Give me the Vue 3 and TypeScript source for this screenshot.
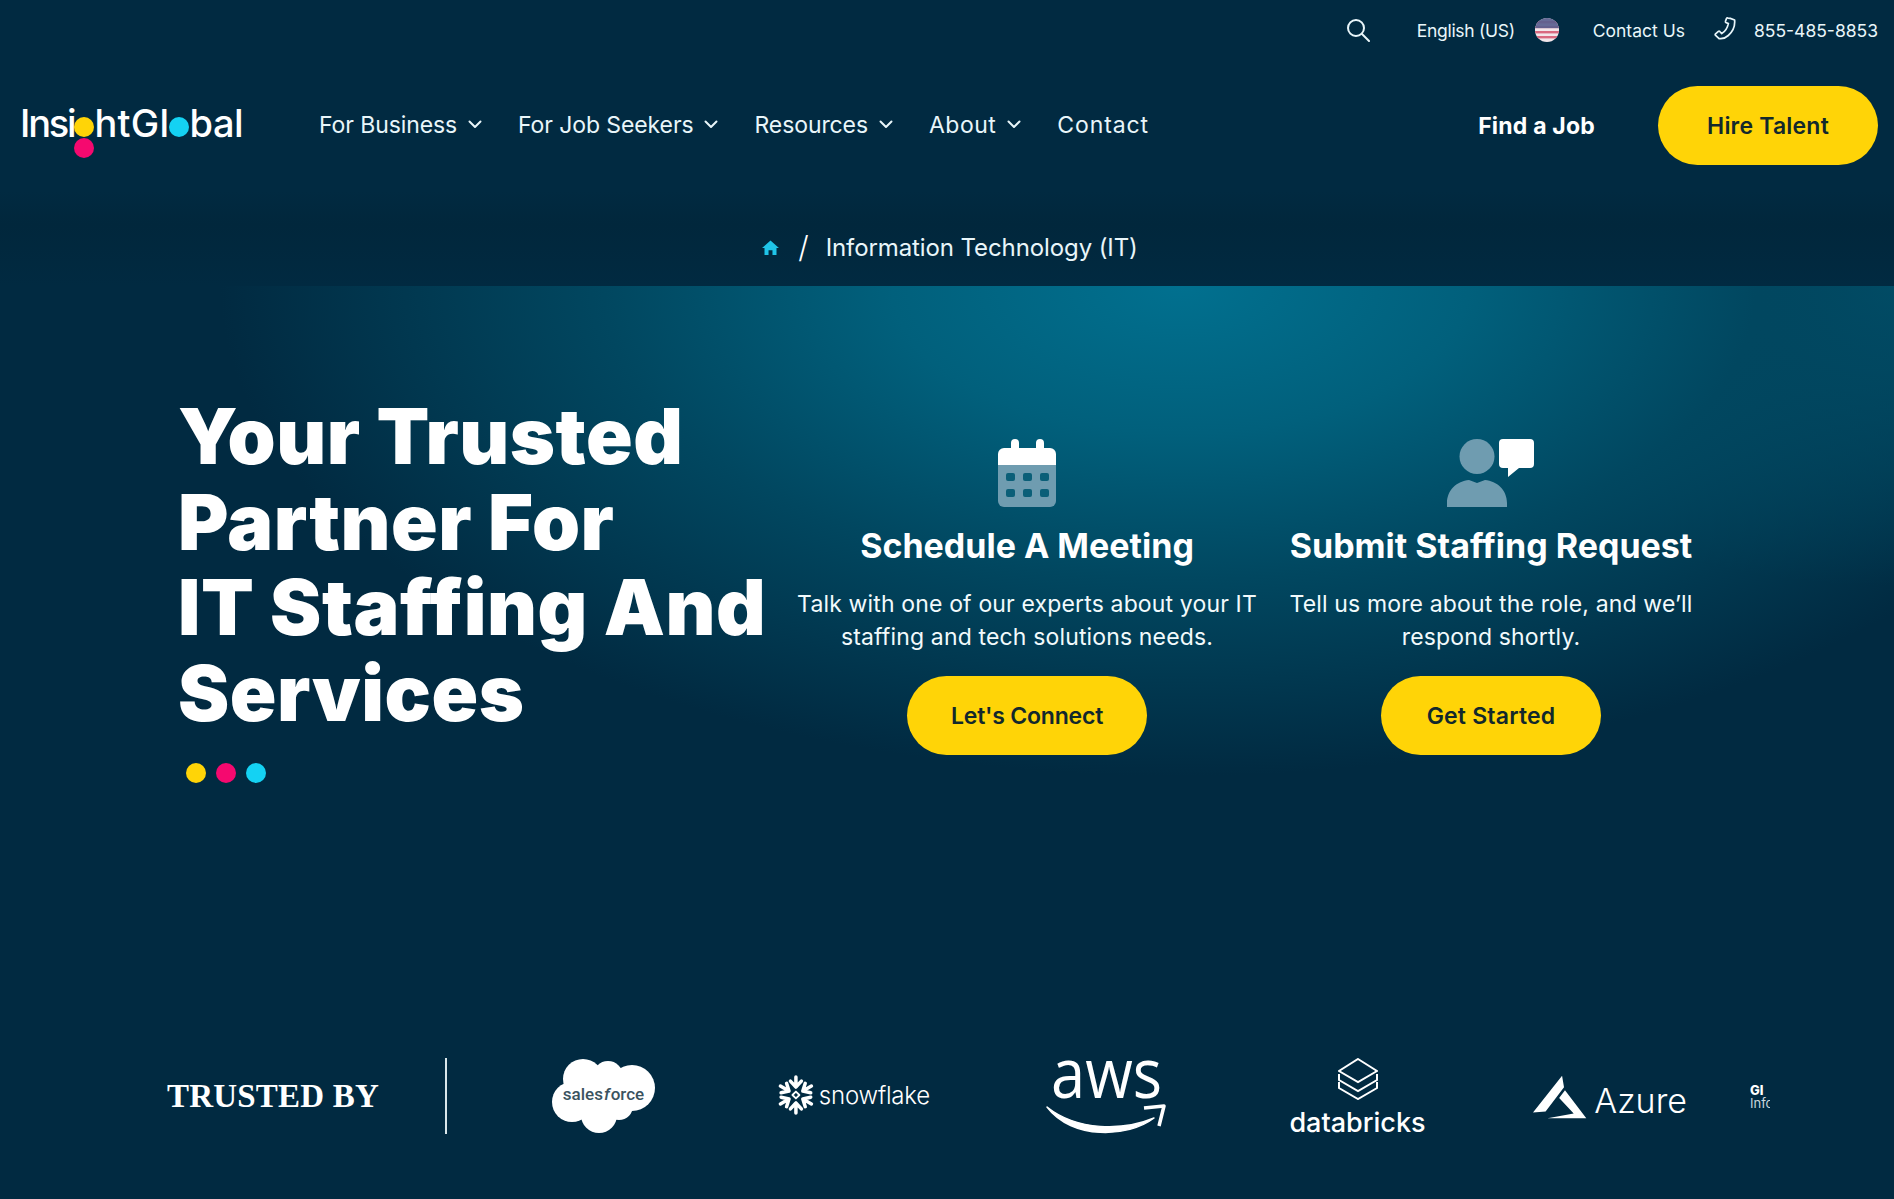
<template>
  <div class="page">
    <header class="topbar">
      <svg class="search" viewBox="0 0 24 24" width="24" height="24" fill="none" stroke="#e9f6fa" stroke-width="2" stroke-linecap="round">
        <circle cx="10" cy="10" r="8" />
        <path d="M16 16l7 7" />
      </svg>
      <span class="lang">English (US)</span>
      <svg class="flag" viewBox="0 0 24 24" width="24" height="24">
        <defs><clipPath id="flagclip"><circle cx="12" cy="12" r="12" /></clipPath></defs>
        <g clip-path="url(#flagclip)">
          <rect width="24" height="24" fill="#f2e6ea" />
          <rect y="3" width="24" height="2.400" fill="#d9687f" />
          <rect y="8" width="24" height="2.400" fill="#d9687f" />
          <rect y="13" width="24" height="2.400" fill="#d9687f" />
          <rect y="18" width="24" height="2.400" fill="#d9687f" />
          <rect width="24" height="10.400" fill="#5a5f8f" opacity=".92" />
          <rect y="10.400" width="24" height="2" fill="#f2e6ea" />
        </g>
      </svg>
      <span class="contact">Contact Us</span>
      <svg class="phone" viewBox="0 0 24 24" width="23" height="23" fill="none" stroke="#e9f6fa" stroke-width="1.800" stroke-linejoin="round">
        <path d="M17 1.500l4.500 1.600c.6 6-2.200 12.200-6.600 16.200-2.400 2.200-6.500 3.700-9.600 3.200L1.400 19c-.3-.6-.2-1 .2-1.400l3-2.600c.5-.4 1-.3 1.400.1l2.100 2.200c3.600-2.200 6-6.400 6.900-10.400l-2.600-1.200c-.5-.3-.6-.7-.4-1.200l1-2.900c.3-.6 1-.7 1.600-.5z" />
      </svg>
      <span class="tel">855-485-8853</span>
    </header>

    <nav class="nav">
      <div class="logo">
        <span class="tight">Insi</span>
        <span class="ldot yellow"><i class="ldot pink"></i></span>
        <span class="loose">htGl</span>
        <span class="ldot cyan"></span>
        <span class="end">bal</span>
      </div>
      <ul class="menu">
        <li v-for="item in menu" :key="item.label">
          {{ item.label }}
          <svg v-if="item.caret" viewBox="0 0 14 9" width="14" height="9" fill="none" stroke="#e9f6fa" stroke-width="2" stroke-linecap="round" stroke-linejoin="round">
            <path d="M1.500 1.500L7 7l5.500-5.500" />
          </svg>
        </li>
      </ul>
      <a class="find">Find a Job</a>
      <a class="btn hire">Hire Talent</a>
    </nav>

    <div class="crumbs">
      <svg viewBox="0 0 18 16" width="17" height="15" fill="#1fc4e8">
        <path d="M9 .5L18 8.600h-2.600V16h-4.300v-5H6.900v5H2.600V8.600H0z" />
      </svg>
      <span class="slash">/</span>
      <span>Information Technology (IT)</span>
    </div>

    <section class="hero">
      <div class="headline">
        <h1>Your Trusted<br />Partner For<br />IT Staffing And<br />Services</h1>
        <div class="dots">
          <i class="yellow"></i>
          <i class="pink"></i>
          <i class="cyan"></i>
        </div>
      </div>

      <div class="card">
        <svg class="icon" viewBox="0 0 58 68" width="58" height="68">
          <path d="M0 26h58v36a6 6 0 0 1-6 6H6a6 6 0 0 1-6-6z" fill="#6f9cb0" />
          <path d="M0 26V15a6 6 0 0 1 6-6h7V4a4 4 0 0 1 8 0v5h17V4a4 4 0 0 1 8 0v5h6a6 6 0 0 1 6 6v11z" fill="#fff" />
          <g fill="#0b5f78">
            <rect v-for="c in calendarCells" :key="c.x + '-' + c.y" :x="c.x" :y="c.y" width="9" height="8" rx="2" />
          </g>
        </svg>
        <h2>Schedule A Meeting</h2>
        <p>Talk with one of our experts about your IT<br />staffing and tech solutions needs.</p>
        <a class="btn connect">Let's Connect</a>
      </div>

      <div class="card">
        <svg class="icon" viewBox="0 0 88 68" width="88" height="68">
          <circle cx="30" cy="17.500" r="17.500" fill="#6f9cb0" />
          <path d="M0 68V64C0 51 10 42 22 41l8 3 8-3c12 1 22 10 22 23v4z" fill="#6f9cb0" />
          <path d="M56 0h27a4 4 0 0 1 4 4v21a4 4 0 0 1-4 4H72l-11 9v-9h-5a4 4 0 0 1-4-4V4a4 4 0 0 1 4-4z" fill="#fff" />
        </svg>
        <h2>Submit Staffing Request</h2>
        <p>Tell us more about the role, and we’ll<br />respond shortly.</p>
        <a class="btn started">Get Started</a>
      </div>
    </section>

    <section class="trusted">
      <div class="tlabel">TRUSTED BY</div>
      <div class="logos">
        <div class="l-sf">
          <svg viewBox="0 0 105 75" width="105" height="75" fill="#fff">
            <circle cx="32" cy="21" r="20" />
            <circle cx="57" cy="18" r="15" />
            <circle cx="81" cy="30" r="23" />
            <circle cx="21" cy="44" r="20" />
            <circle cx="48" cy="57" r="18" />
            <circle cx="68" cy="48" r="14" />
            <circle cx="50" cy="36" r="20" />
          </svg>
          <span class="sf-word">sales<i>f</i>orce</span>
        </div>

        <div class="l-snow">
          <svg viewBox="0 0 40 40" width="40" height="40" fill="none" stroke="#fff" stroke-width="3.500" stroke-linecap="round" stroke-linejoin="round">
            <path v-for="a in snowAngles" :key="a" d="M20 12V2M14.500 6l5.500 6 5.500-6" :transform="`rotate(${a} 20 20)`" />
            <path d="M20 16.500l3.500 3.500-3.500 3.500-3.500-3.500z" stroke-width="1.800" />
          </svg>
          <span>snowflake</span>
        </div>

        <svg class="l-aws" viewBox="0 0 122 78" width="122" height="78">
          <text x="5" y="40" textLength="111" lengthAdjust="spacingAndGlyphs" class="aws-text">aws</text>
          <path d="M1 49c30 24 76 24 107 11-26 20-82 22-107-11z" fill="#fff" stroke="#fff" stroke-width="1.500" stroke-linejoin="round" />
          <path d="M98 50l20-2-5 20" fill="none" stroke="#fff" stroke-width="3.500" stroke-linejoin="round" />
        </svg>

        <div class="l-db">
          <svg viewBox="0 0 40 42" width="40" height="42" fill="none" stroke="#fff" stroke-width="2">
            <path d="M20 1l19 12-19 11L1 13zM1 16v6l19 11 19-11v-6M1 24v6l19 11 19-11v-6" />
          </svg>
          <span>databricks</span>
        </div>

        <div class="l-az">
          <svg viewBox="0 0 56 44" width="56" height="44" fill="#fff">
            <path d="M30 0L0 38l13-1L32 12zM33 15l22 29H15l27-5-15-16z" />
          </svg>
          <span>Azure</span>
        </div>

        <div class="l-gi"><b>GI</b><span>Info</span></div>
      </div>
    </section>
  </div>
</template>

<script setup lang="ts">
interface MenuItem {
  label: string
  caret: boolean
}

const menu: MenuItem[] = [
  { label: 'For Business', caret: true },
  { label: 'For Job Seekers', caret: true },
  { label: 'Resources', caret: true },
  { label: 'About', caret: true },
  { label: 'Contact', caret: false }
]

const calendarCells = [34, 50].flatMap((y) => [8, 25, 42].map((x) => ({ x, y })))
const snowAngles = [0, 60, 120, 180, 240, 300]
</script>

<style>
html, body { margin: 0; background: #012a41; }
</style>

<style scoped>
* { box-sizing: border-box; }

.page {
  width: 1894px;
  height: 1199px;
  overflow: hidden;
  background: #012a41;
  color: #fff;
  font-family: Inter, "Noto Sans", sans-serif;
  display: flex;
  flex-direction: column;
}

.topbar {
  height: 60px;
  display: flex;
  align-items: center;
  justify-content: flex-end;
  padding-right: 16px;
  font-size: 17.500px;
  color: #e9f6fa;
}
.search { margin-right: 47px; }
.lang { letter-spacing: -0.3px; }
.flag { margin-left: 20px; }
.contact { margin-left: 34px; }
.phone { margin-left: 29px; margin-top: -4px; }
.tel { margin-left: 17px; }

.nav {
  height: 131px;
  display: flex;
  align-items: center;
  padding: 0 16px 0 20px;
}
.logo {
  display: flex;
  align-items: center;
  font-size: 38px;
  font-weight: 500;
  width: 299px;
  padding-bottom: 6px;
}
.tight { letter-spacing: -2.200px; }
.loose { letter-spacing: 0.3px; }
.end { letter-spacing: -0.4px; }
.ldot {
  display: inline-block;
  position: relative;
  width: 20px;
  height: 20px;
  border-radius: 50%;
  margin: 9px 0 0;
}
.ldot.pink { position: absolute; left: 0; top: 21px; margin: 0; }
.yellow { background: #ffd407; }
.pink { background: #f5096f; }
.cyan { background: #14d2f3; }

.menu {
  list-style: none;
  margin: 0;
  padding: 0 0 2px;
  flex: 1;
  display: flex;
  gap: 36px;
  font-size: 23px;
  letter-spacing: -0.1px;
  color: #e9f6fa;
}
.menu li { display: flex; align-items: center; gap: 11px; }
.menu li:nth-child(4) { letter-spacing: 0.5px; }
.menu li:last-child { letter-spacing: 0.9px; }

.find { font-size: 23px; font-weight: 700; letter-spacing: 0.2px; margin-right: 63px; }

.btn {
  display: flex;
  align-items: center;
  justify-content: center;
  height: 79px;
  border-radius: 40px;
  background: #ffd407;
  color: #12282c;
  font-size: 23px;
  font-weight: 600;
  letter-spacing: 0.2px;
}
.hire { width: 220px; }

.crumbs {
  height: 95px;
  padding: 17px 0 0 6px;
  display: flex;
  align-items: center;
  justify-content: center;
  font-size: 24px;
  letter-spacing: -0.1px;
  color: #e9f6fa;
  background: linear-gradient(#012a41, #01273c 35%, #012a41);
}
.slash { margin: 0 17px 0 19px; font-size: 30px; font-weight: 300; color: #fff; }

.hero {
  height: 750px;
  padding: 108px 0 0 178px;
  display: grid;
  grid-template-columns: 617px 464px 464px;
  align-items: start;
  background:
    radial-gradient(ellipse 960px 490px at 1180px 0, #01708f 0%, #01607c 30%, #014760 60%, rgba(1, 42, 65, 0) 100%),
    radial-gradient(ellipse 500px 300px at 1894px 0, rgba(1, 100, 128, .7), rgba(1, 42, 65, 0) 100%);
}
.headline h1 {
  margin: 0;
  font-size: 77px;
  line-height: 85.500px;
  font-weight: 900;
  letter-spacing: 0.5px;
}
.dots { display: flex; gap: 10px; margin: 27px 0 0 8px; }
.dots i { width: 20px; height: 20px; border-radius: 50%; }

.card {
  padding-top: 45px;
  display: flex;
  flex-direction: column;
  align-items: center;
  text-align: center;
}
.icon { display: block; }
.card h2 {
  margin: 19px 0 0;
  font-size: 34px;
  line-height: 40px;
  font-weight: 700;
  white-space: nowrap;
}
.card p {
  margin: 22px 0 0;
  font-size: 23px;
  line-height: 33px;
  letter-spacing: 0.15px;
  color: #f2fafc;
  white-space: nowrap;
}
.connect { width: 240px; margin-top: 22px; letter-spacing: -0.2px; }
.started { width: 220px; margin-top: 22px; }

.trusted {
  flex: 1;
  display: flex;
  align-items: flex-start;
  padding: 22px 0 0 167px;
}
.tlabel {
  width: 280px;
  height: 76px;
  border-right: 2px solid #d9e6ea;
  font-family: "Liberation Serif", serif;
  font-weight: 700;
  font-size: 33px;
  line-height: 76px;
  letter-spacing: 0.2px;
}
.logos {
  width: 1323px;
  display: flex;
  align-items: flex-start;
  padding-left: 104px;
  overflow: hidden;
}
.logos > * { flex: none; }

.l-sf { position: relative; width: 105px; height: 75px; }
.l-sf svg { display: block; }
.sf-word {
  position: absolute;
  left: 0;
  right: 0;
  top: 24px;
  text-align: center;
  font-family: Roboto, sans-serif;
  font-size: 17px;
  line-height: 24px;
  font-weight: 500;
  color: #3b5360;
}
.sf-word i { font-style: italic; margin: 0 1px; }

.l-snow {
  margin: 17px 0 0 120px;
  width: 154px;
  display: flex;
  align-items: center;
  gap: 3px;
  font-size: 24px;
  font-weight: 300;
  letter-spacing: -0.2px;
}
.l-aws { margin-left: 116px; overflow: visible; }
.aws-text { font-family: "Open Sans", sans-serif; font-size: 70px; font-weight: 500; fill: #fff; }

.l-db {
  margin-left: 123px;
  width: 133px;
  display: flex;
  flex-direction: column;
  align-items: center;
  font-size: 27px;
  font-weight: 500;
  line-height: 36px;
}
.l-db span { margin-top: 5px; }
.l-az {
  margin: 17px 0 0 109px;
  width: 154px;
  display: flex;
  align-items: flex-end;
  gap: 7px;
  font-size: 34px;
  line-height: 42px;
  font-weight: 300;
}
.l-az span { position: relative; top: 3px; }
.l-gi {
  margin: 26px 0 0 63px;
  width: 20px;
  overflow: hidden;
  display: flex;
  flex-direction: column;
  font-size: 13px;
  line-height: 13px;
  color: #c9d6dc;
}
.l-gi b { color: #fff; font-weight: 800; }
</style>
